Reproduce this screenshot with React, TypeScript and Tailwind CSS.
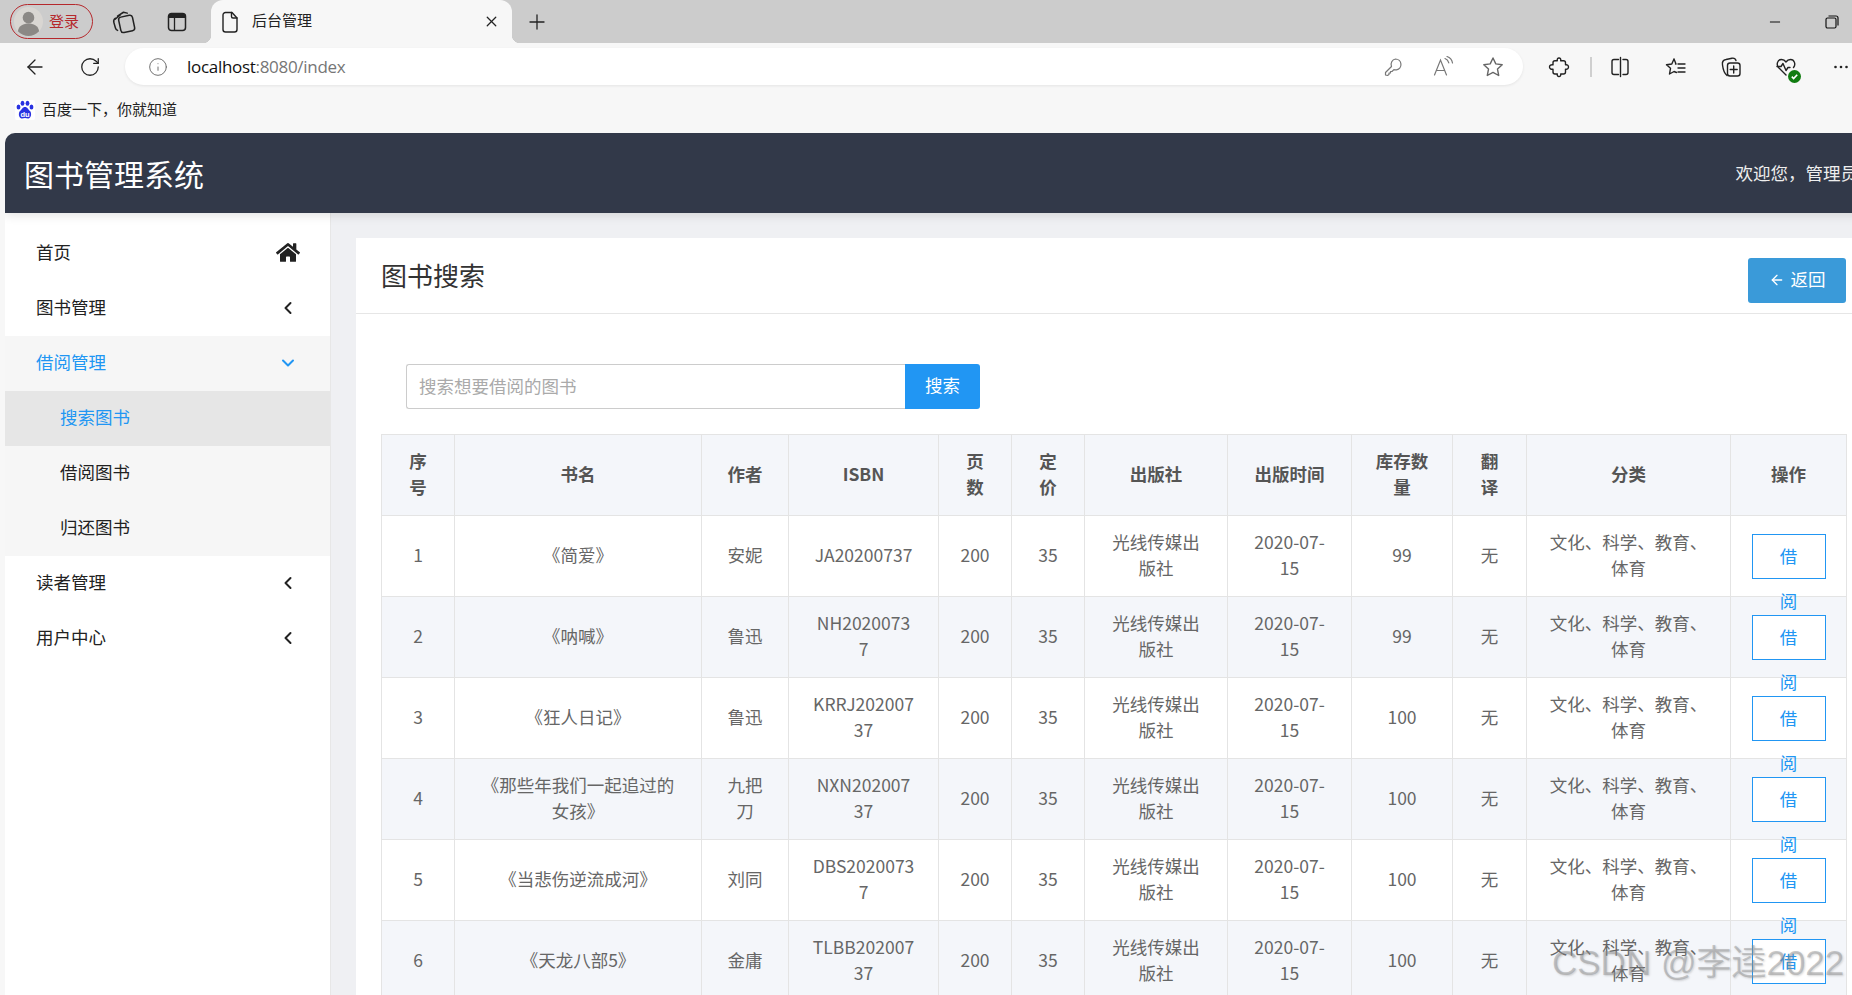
import React from "react";
import { FaHome } from "react-icons/fa";
import { ArrowLeft, RotateCw, Info, Plus, X, Minus, ChevronLeft, ChevronDown } from "lucide-react";

type Row = [string, string, string, string, string];
const rows: Row[] = [
  ["1", "《简爱》", "安妮", "JA20200737", "99"],
  ["2", "《呐喊》", "鲁迅", "NH2020073\n7", "99"],
  ["3", "《狂人日记》", "鲁迅", "KRRJ202007\n37", "100"],
  ["4", "《那些年我们一起追过的女孩》", "九把刀", "NXN202007\n37", "100"],
  ["5", "《当悲伤逆流成河》", "刘同", "DBS2020073\n7", "100"],
  ["6", "《天龙八部5》", "金庸", "TLBB202007\n37", "100"],
  ["7", "《活着》", "余华", "HZ20200737", "100"],
];
const heads = ["序号", "书名", "作者", "ISBN", "页数", "定价", "出版社", "出版时间", "库存数量", "翻译", "分类", "操作"];

const cell = "border border-[#e4e4e4] px-[20px] pt-0 pb-[2px] text-center align-middle";

function Svg({ children, className = "" }: { children: React.ReactNode; className?: string }) {
  return (
    <svg viewBox="0 0 24 24" width="24" height="24" fill="none" stroke="#222" strokeWidth="1.4" strokeLinecap="round" strokeLinejoin="round" className={"shrink-0 " + className}>
      {children}
    </svg>
  );
}

function Browser() {
  return (
    <div className="shrink-0 bg-[#f7f7f7]">
      <div className="flex h-[43px] items-center bg-[#cccccc] pl-[10px] pr-[8px]">
        <div className="flex h-[35px] w-[83px] shrink-0 items-center rounded-full border-[1.5px] border-[#b5282c] pl-[3px]">
          <svg viewBox="0 0 30 30" width="29" height="29" className="shrink-0">
            <circle cx="15" cy="15" r="15" fill="#d9d6d2" />
            <circle cx="15" cy="11" r="6" fill="#8b8885" />
            <path d="M4 25c1-6 6-8 11-8s10 2 11 8c-3 3-7 5-11 5s-8-2-11-5z" fill="#8b8885" />
          </svg>
          <span className="ml-[6px] pb-[2px] text-[15px] leading-none text-[#b5282c]">登录</span>
        </div>
        <svg viewBox="0 0 24 24" width="26" height="26" fill="none" stroke="#222" strokeWidth="1.4" strokeLinecap="round" strokeLinejoin="round" className="ml-[18px] shrink-0">
          <path d="M6 6.500 11.500 3l3.500.8M3.800 9.500 8.500 5.500M4.200 8.500c-1.500 1-2 2.300-1.600 3.800l1.500 5.200c.3 1.100 1 1.800 2 2.200" />
          <rect x="8" y="6.500" width="13" height="14.500" rx="2.500" transform="rotate(-12 14.500 14)" />
        </svg>
        <svg viewBox="0 0 24 24" width="24" height="24" fill="none" className="ml-[28px] shrink-0">
          <rect x="3.500" y="3.500" width="17" height="17" rx="3" stroke="#222" strokeWidth="1.500" />
          <path d="M3.500 6.500a3 3 0 0 1 3-3h11a3 3 0 0 1 3 3v1.500h-17z" fill="#222" />
          <path d="M9.500 8v12" stroke="#222" strokeWidth="1.300" />
        </svg>
        <div className="relative ml-[22px] flex h-[43px] w-[301px] shrink-0 items-center self-end rounded-t-[12px] bg-[#f7f7f7] pl-[7px] pr-[12px]">
          <span className="absolute bottom-0 -left-[8px] h-[8px] w-[8px] bg-[radial-gradient(circle_at_0_0,#cccccc_8px,#f7f7f7_8.500px)]" />
          <span className="absolute bottom-0 -right-[8px] h-[8px] w-[8px] bg-[radial-gradient(circle_at_100%_0,#cccccc_8px,#f7f7f7_8.500px)]" />
          <Svg>
            <path d="M5 5a2.500 2.500 0 0 1 2.500-2.500h6.500l5 5.500v11.500a2.500 2.500 0 0 1-2.500 2.500h-9a2.500 2.500 0 0 1-2.500-2.500z" />
            <path d="M13.500 2.500v4a1.500 1.500 0 0 0 1.500 1.500h4" />
          </Svg>
          <span className="ml-[10px] pb-[2px] text-[15px] text-[#222]">后台管理</span>
          <X size={17} strokeWidth={1.800} color="#222" className="ml-auto" />
        </div>
        <Plus size={24} strokeWidth={1.300} color="#222" className="ml-[13px] shrink-0" />
        <Minus size={16} strokeWidth={1.500} color="#111" className="ml-auto shrink-0" />
        <svg viewBox="0 0 16 16" width="16" height="16" fill="none" stroke="#111" strokeWidth="1.200" className="ml-[41px] mr-[4px] shrink-0">
          <rect x="2" y="4" width="10" height="10" rx="1.500" />
          <path d="M4.500 2h7.500a2 2 0 0 1 2 2v7.500" />
        </svg>
      </div>
      <div className="flex h-[47px] items-center">
        <ArrowLeft size={24} strokeWidth={1.300} color="#222" className="ml-[23px] shrink-0" />
        <RotateCw size={22} strokeWidth={1.400} color="#222" className="ml-[32px] shrink-0" />
        <div className="ml-[24px] flex h-[37px] w-[1398px] shrink-0 items-center rounded-full bg-white pl-[23px] pr-[18px] shadow-[0_1px_3px_rgba(0,0,0,0.08)]">
          <Info size={20} strokeWidth={1.100} color="#666" className="shrink-0" />
          <span className="ml-[19px] font-['Open_Sans',sans-serif] text-[17px] tracking-[-0.3px] text-[#111]">
            localhost<span className="text-[#767676]">:8080/index</span>
          </span>
          <div className="ml-auto flex items-center gap-[26px]">
            <svg viewBox="0 0 24 24" width="24" height="24" fill="none" stroke="#777" strokeWidth="1.200" strokeLinejoin="round" className="shrink-0">
              <path d="M14.500 4a5.500 5.500 0 0 1 1 10.900 5.500 5.500 0 0 1-2.600-.300L11 16.500H9.500V18H8v1.500L6.500 20.500 4.500 20v-2.500l6-6A5.500 5.500 0 0 1 14.500 4z" />
            </svg>
            <svg viewBox="0 0 24 24" width="24" height="24" fill="none" stroke="#777" strokeWidth="1.200" strokeLinecap="round" className="shrink-0">
              <path d="M3.500 20 9.500 5l6 15M5.500 15.500h8" />
              <path d="M14 3.500c2 .8 3.300 2.300 3.800 4.300M16 1.500c3 1 5 3.300 5.500 6.500" />
            </svg>
            <svg viewBox="0 0 24 24" width="24" height="24" fill="none" stroke="#666" strokeWidth="1.400" strokeLinejoin="round" className="shrink-0">
              <path d="m12 3 2.800 5.900 6.400.8-4.700 4.400 1.200 6.400L12 17.400l-5.700 3.100 1.200-6.400-4.700-4.400 6.400-.8z" />
            </svg>
          </div>
        </div>
        <Svg className="ml-[24px]">
          <path d="M8 5.800H10.300C9.900 3.800 10.800 3 12 3S14.100 3.800 13.700 5.800H16.500A2 2 0 0 1 18.500 7.800V9.800C20.500 9.400 21.500 10.500 21.500 12S20.500 14.600 18.500 14.200V17A2 2 0 0 1 16.500 19H13.700C14.100 20.500 13.200 21.500 12 21.500S9.900 20.500 10.300 19H8A2 2 0 0 1 6 17V14.200C4 14.600 2.500 13.500 2.500 12S4 9.400 6 9.800V7.800A2 2 0 0 1 8 5.800z" />
        </Svg>
        <div className="ml-[19px] h-[20px] w-[2px] shrink-0 bg-[#cfcfcf]" />
        <Svg className="ml-[16px]">
          <path d="M10.500 4.500H6a2 2 0 0 0-2 2v11a2 2 0 0 0 2 2h4.500M15 4.500h3a2 2 0 0 1 2 2v11a2 2 0 0 1-2 2h-3M12.500 2.500v19" />
        </Svg>
        <Svg className="ml-[32px]">
          <path d="m10 4 2 5h-.5M10 4 7.800 9 2.500 9.800l4 3.500L5.500 19l4.500-2.500 2.500 1M14 9h7M14 13h7M14 17h7" />
        </Svg>
        <Svg className="ml-[31px]">
          <path d="M8 20.500C6 19 4 14 3.500 10 3 7 4 5 7 4.500l6-1.300c2-.3 3.500.5 4 2.300" />
          <rect x="8.500" y="8" width="12.500" height="13" rx="2.500" />
          <path d="M14.700 11v7M11.200 14.500h7" />
        </Svg>
        <div className="relative ml-[31px] h-[24px] w-[24px] shrink-0">
          <Svg>
            <path d="M12 20 4.500 12.500C2 9.500 3.500 4.500 7.500 4.500c2 0 3.500 1 4.500 2.500 1-1.500 2.500-2.500 4.500-2.500 4 0 5.500 5 3 8" />
            <path d="M3 11.500h4l2 -3 3 7 2-3h2" />
          </Svg>
          <span className="absolute -bottom-[4px] -right-[3px] flex h-[13px] w-[13px] items-center justify-center rounded-full bg-[#107c10]">
            <svg viewBox="0 0 10 10" width="9" height="9" fill="none" stroke="#fff" strokeWidth="1.800"><path d="m2 5.200 2 2 4-4.200" /></svg>
          </span>
        </div>
        <svg viewBox="0 0 24 24" width="24" height="24" fill="#222" className="ml-[31px] shrink-0">
          <circle cx="6.500" cy="12" r="1.300" /><circle cx="12" cy="12" r="1.300" /><circle cx="17.500" cy="12" r="1.300" />
        </svg>
      </div>
      <div className="flex h-[43px] items-center pb-[3px] pl-[15px]">
        <svg viewBox="0 0 20 20" width="20" height="20" className="shrink-0">
          <rect width="20" height="20" rx="2" fill="#fff" />
          <g fill="#2932e1">
            <ellipse cx="3.500" cy="7" rx="1.900" ry="2.500" />
            <ellipse cx="7.500" cy="3.300" rx="1.900" ry="2.500" />
            <ellipse cx="12.500" cy="3.300" rx="1.900" ry="2.500" />
            <ellipse cx="16.500" cy="7" rx="1.900" ry="2.500" />
            <path d="M10 7c-2.500 0-3 2.500-5 4-1.800 1.500-1.500 7 1.500 7.500 1.300.2 2.300-.5 3.500-.5s2.200.7 3.500.5c3-.5 3.300-6 1.500-7.500-2-1.500-2.500-4-5-4z" />
          </g>
          <text x="10" y="17" textAnchor="middle" fontSize="7.500" fontWeight="700" fill="#fff" fontFamily="Liberation Sans, sans-serif">du</text>
        </svg>
        <span className="ml-[7px] pb-[1px] text-[15px] text-[#222]">百度一下，你就知道</span>
      </div>
    </div>
  );
}

function MenuRow({ label, icon, tone = "", sub = false }: { label: string; icon?: React.ReactNode; tone?: string; sub?: boolean }) {
  return (
    <div className={`flex h-[55px] items-center justify-between pr-[30px] ${sub ? "pl-[55px]" : "pl-[31px]"} ${tone}`}>
      <span className="pb-[3px]">{label}</span>
      {icon && <span className="flex w-[24px] justify-center pb-[2px]">{icon}</span>}
    </div>
  );
}

function Sidebar() {
  return (
    <div className="w-[326px] shrink-0 border-r border-[#e7e7e7] bg-white pt-[13px] text-[17.500px] text-[#222]">
      <MenuRow label="首页" icon={<FaHome size={25} color="#222" />} />
      <MenuRow label="图书管理" icon={<ChevronLeft size={20} strokeWidth={2.400} color="#222" />} />
      <MenuRow label="借阅管理" tone="bg-[#f6f6f6] text-[#2196f3]" icon={<ChevronDown size={20} strokeWidth={2.400} color="#2196f3" />} />
      <MenuRow sub label="搜索图书" tone="bg-[#e6e6e6] text-[#2196f3]" />
      <MenuRow sub label="借阅图书" tone="bg-[#f6f6f6]" />
      <MenuRow sub label="归还图书" tone="bg-[#f6f6f6]" />
      <MenuRow label="读者管理" icon={<ChevronLeft size={20} strokeWidth={2.400} color="#222" />} />
      <MenuRow label="用户中心" icon={<ChevronLeft size={20} strokeWidth={2.400} color="#222" />} />
    </div>
  );
}

function BookTable() {
  const widths = [73, 247, 87, 150, 73, 73, 143, 124, 101, 74, 204, 116];
  return (
    <table className="w-[1465px] table-fixed border-collapse text-[17.500px] leading-[26px] text-[#666]">
      <colgroup>
        {widths.map((w, i) => (
          <col key={i} style={{ width: w }} />
        ))}
      </colgroup>
      <thead>
        <tr className="h-[81px] bg-[#f4f6fa]">
          {heads.map((h) => (
            <th key={h} className={cell + " font-bold text-[#555]"}>{h}</th>
          ))}
        </tr>
      </thead>
      <tbody>
        {rows.map((r, i) => (
          <tr key={r[0]} className={i % 2 ? "h-[81px] bg-[#f4f6fa]" : "h-[81px] bg-white"}>
            <td className={cell}>{r[0]}</td>
            <td className={cell}>{r[1]}</td>
            <td className={cell}>{r[2]}</td>
            <td className={cell + " whitespace-pre-line"}>{r[3]}</td>
            <td className={cell}>200</td>
            <td className={cell}>35</td>
            <td className={cell}>光线传媒出版社</td>
            <td className={cell}>2020-07-15</td>
            <td className={cell}>{r[4]}</td>
            <td className={cell}>无</td>
            <td className={cell}>文化、科学、教育、体育</td>
            <td className="border border-[#e4e4e4] px-[20px] py-0 text-center align-middle">
              <a className="mx-auto block h-[45px] w-[74px] border border-[#2196f3] bg-white px-[19px] text-center leading-[42px] text-[#2196f3]">
                <span className="block h-[45px]">借</span>
                <span className="block">阅</span>
              </a>
            </td>
          </tr>
        ))}
      </tbody>
    </table>
  );
}

export default function App() {
  return (
    <div className="relative flex h-screen flex-col overflow-hidden bg-[#f7f7f7] font-['Noto_Sans_CJK_SC',sans-serif]">
      <Browser />
      <div className="flex-1 overflow-hidden pl-[5px]">
        <div className="flex h-[900px] w-[1891px] flex-col overflow-hidden rounded-tl-[10px] bg-[#eff0f3]">
          <div className="relative z-10 flex h-[80px] shrink-0 items-center justify-between bg-[#323949] pl-[19px] pr-[38px] shadow-[0_2px_10px_rgba(0,0,0,0.12)]">
            <span className="text-[30px] text-white">图书管理系统</span>
            <span className="text-[17.500px] text-[#eeeeee]">欢迎您，管理员</span>
          </div>
          <div className="flex min-h-0 flex-1">
            <Sidebar />
            <div className="min-w-0 flex-1 px-[25px] pt-[25px]">
              <div className="h-[900px] bg-white">
                <div className="flex h-[76px] items-center justify-between border-b border-[#e6e6e6] pl-[25px] pr-[25px]">
                  <span className="mb-[1px] text-[26px] leading-none text-[#333]">图书搜索</span>
                  <button className="mt-[10px] flex h-[45px] w-[98px] items-center justify-center gap-[6px] rounded-[3px] bg-[#3a9ad9] pb-[2px] text-[17.500px] text-white">
                    <ArrowLeft size={16} strokeWidth={2} />
                    返回
                  </button>
                </div>
                <div className="px-[25px] pt-[50px]">
                  <div className="ml-[25px] flex h-[45px] w-[574px]">
                    <input
                      readOnly
                      placeholder="搜索想要借阅的图书"
                      className="h-full min-w-0 flex-1 rounded-l-[3px] border border-r-0 border-[#cccccc] bg-white pb-[2px] pl-[12px] text-[17.500px] outline-none placeholder:text-[#aaaaaa]"
                    />
                    <button className="h-full w-[75px] shrink-0 rounded-r-[3px] bg-[#2196f3] pb-[2px] text-[17.500px] text-white">搜索</button>
                  </div>
                  <div className="mt-[25px]">
                    <BookTable />
                  </div>
                </div>
              </div>
            </div>
          </div>
        </div>
      </div>
      <span className="absolute bottom-[15px] left-[1552px] whitespace-nowrap font-['Liberation_Sans','Noto_Sans_CJK_SC',sans-serif] text-[35px] leading-none text-[rgba(140,140,140,0.45)] [text-shadow:1px_1px_2px_rgba(120,120,120,0.3)]">
        CSDN @李逵2022
      </span>
    </div>
  );
}
